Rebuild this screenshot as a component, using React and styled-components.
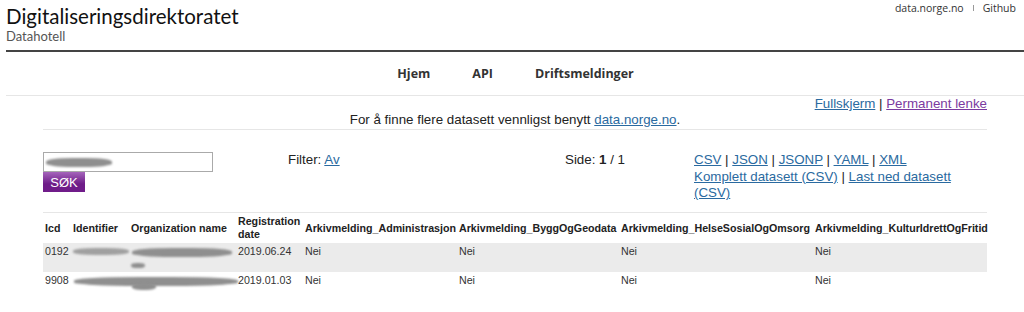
import React from "react";
import styled, { createGlobalStyle } from "styled-components";

const Global = createGlobalStyle`
  html, body { margin: 0; padding: 0; background: #fff; }
  body { font-family: "Liberation Sans", Arial, sans-serif; color: #222; }
  a { color: #2a6aa0; }
`;

const Page = styled.div`
  width: 1024px;
  overflow: hidden;
`;

const Header = styled.header`
  padding-left: 6px;
`;

const TopBar = styled.div`
  display: flex;
  justify-content: space-between;
  align-items: flex-start;
  height: 52px;
  border-bottom: 2px solid #444;
  box-sizing: border-box;
`;

const Brand = styled.div`
  display: flex;
  flex-direction: column;
  padding-top: 4px;
`;

const Title = styled.div`
  font-family: "Lato", sans-serif;
  font-size: 20.5px;
  line-height: 24px;
  color: #111;
`;

const Subtitle = styled.div`
  font-family: "Lato", sans-serif;
  font-size: 13px;
  line-height: 15px;
  color: #555;
  margin-top: 1px;
`;

const TopLinks = styled.div`
  display: flex;
  align-items: center;
  gap: 9px;
  font-family: "Open Sans", sans-serif;
  font-size: 10.5px;
  color: #333;
  padding-right: 8px;
  line-height: 16px;
`;

const Sep = styled.span`
  display: inline-block;
  width: 1px;
  height: 6px;
  background: #999;
`;

const Nav = styled.nav`
  display: flex;
  justify-content: center;
  gap: 42px;
  height: 43px;
  align-items: center;
  border-bottom: 1px solid #e6e6e6;
  font-family: "Open Sans", sans-serif;
  font-weight: 700;
  font-size: 12.5px;
  color: #333;
  padding-left: 1px;
`;

const Main = styled.main`
  padding: 0 37px 0 43px;
  font-size: 13.33px;
  line-height: 16px;
  color: #222;
`;

const ViewLinks = styled.div`
  text-align: right;
  height: 15px;
  line-height: 15px;
  a:last-child { color: #7b3aa0; }
`;

const Notice = styled.div`
  text-align: center;
  height: 17px;
  line-height: 17px;
  padding-bottom: 1px;
  border-bottom: 1px solid #e6e6e6;
`;

const Controls = styled.div`
  display: grid;
  grid-template-columns: 245px 277px 129px 262px;
  padding-top: 22px;
  height: 83px;
  box-sizing: border-box;
  border-bottom: 1px solid #e6e6e6;
  line-height: 16.5px;
`;

const SearchForm = styled.form`
  display: flex;
  flex-direction: column;
  align-items: flex-start;
  margin: 0;
`;

const SearchInput = styled.div`
  width: 170px;
  height: 20px;
  box-sizing: border-box;
  border: 1px solid #aaa;
  display: flex;
  align-items: center;
  padding-left: 2px;
`;

const Button = styled.button`
  width: 42px;
  height: 20px;
  border: none;
  padding: 0;
  color: #fff;
  font-family: "Liberation Sans", Arial, sans-serif;
  font-size: 13px;
  background: linear-gradient(#a565bb, #6e1c88 60%, #701c8a);
`;

const Cell = styled.div``;

const Redact = styled.span`
  display: inline-block;
  width: ${(p) => p.w}px;
  height: ${(p) => p.h || 8}px;
  background: ${(p) => p.c || "#8f8f8f"};
  border-radius: 40%;
  filter: blur(1.2px);
  vertical-align: middle;
  margin-left: ${(p) => p.ml || 0}px;
`;

const Table = styled.table`
  width: 944px;
  table-layout: fixed;
  border-collapse: collapse;
  font-size: 10.67px;
  line-height: 13px;
`;

const Th = styled.th`
  width: ${(p) => p.w}px;
  text-align: left;
  font-weight: 700;
  padding: 1px 2px;
  vertical-align: middle;
  height: 30px;
  box-sizing: border-box;
  color: #222;
`;

const Tr = styled.tr`
  background: ${(p) => (p.shade ? "#ebebeb" : "#fff")};
`;

const Td = styled.td`
  padding: 2px 2px 0;
  vertical-align: top;
  height: ${(p) => p.h || 29}px;
  box-sizing: border-box;
  color: #333;
  overflow: visible;
  white-space: nowrap;
`;

const Stack = styled.div`
  display: flex;
  flex-direction: column;
  align-items: flex-start;
  gap: 6px;
  padding-top: 3px;
`;

const cols = [
  ["Icd", 28],
  ["Identifier", 58],
  ["Organization name", 107],
  ["Registration date", 67],
  ["Arkivmelding_Administrasjon", 154],
  ["Arkivmelding_ByggOgGeodata", 162],
  ["Arkivmelding_HelseSosialOgOmsorg", 194],
  ["Arkivmelding_KulturIdrettOgFritid", 174],
];

export default function App() {
  return (
    <Page>
      <Global />
      <Header>
        <TopBar>
          <Brand>
            <Title>Digitaliseringsdirektoratet</Title>
            <Subtitle>Datahotell</Subtitle>
          </Brand>
          <TopLinks>
            <span>data.norge.no</span>
            <Sep />
            <span>Github</span>
          </TopLinks>
        </TopBar>
        <Nav>
          <span>Hjem</span>
          <span>API</span>
          <span>Driftsmeldinger</span>
        </Nav>
      </Header>
      <Main>
        <ViewLinks>
          <a href="#">Fullskjerm</a> | <a href="#">Permanent lenke</a>
        </ViewLinks>
        <Notice>
          For å finne flere datasett vennligst benytt <a href="#">data.norge.no</a>.
        </Notice>
        <Controls>
          <SearchForm onSubmit={(e) => e.preventDefault()}>
            <SearchInput>
              <Redact w={66} h={9} />
            </SearchInput>
            <Button type="button">SØK</Button>
          </SearchForm>
          <Cell>
            Filter: <a href="#">Av</a>
          </Cell>
          <Cell>
            Side: <b>1</b> / 1
          </Cell>
          <Cell>
            <a href="#">CSV</a> | <a href="#">JSON</a> | <a href="#">JSONP</a> |{" "}
            <a href="#">YAML</a> | <a href="#">XML</a>
            <br />
            <a href="#">Komplett datasett (CSV)</a> | <a href="#">Last ned datasett (CSV)</a>
          </Cell>
        </Controls>
        <Table>
          <thead>
            <tr>
              {cols.map(([n, w]) => (
                <Th key={n} w={w}>
                  {n}
                </Th>
              ))}
            </tr>
          </thead>
          <tbody>
            <Tr shade>
              <Td>0192</Td>
              <Td>
                <Stack>
                  <Redact w={56} h={7} c="#a0a0a0" />
                </Stack>
              </Td>
              <Td>
                <Stack>
                  <Redact w={100} h={9} ml={1} />
                  <Redact w={14} h={5} />
                </Stack>
              </Td>
              <Td>2019.06.24</Td>
              <Td>Nei</Td>
              <Td>Nei</Td>
              <Td>Nei</Td>
              <Td>Nei</Td>
            </Tr>
            <Tr>
              <Td h={30}>9908</Td>
              <Td h={30}>
                <Stack>
                  <Redact w={164} h={9} ml={1} />
                </Stack>
              </Td>
              <Td h={30}>
                <Stack>
                  <span />
                  <Redact w={24} h={7} ml={1} />
                </Stack>
              </Td>
              <Td h={30}>2019.01.03</Td>
              <Td h={30}>Nei</Td>
              <Td h={30}>Nei</Td>
              <Td h={30}>Nei</Td>
              <Td h={30}>Nei</Td>
            </Tr>
          </tbody>
        </Table>
      </Main>
    </Page>
  );
}
